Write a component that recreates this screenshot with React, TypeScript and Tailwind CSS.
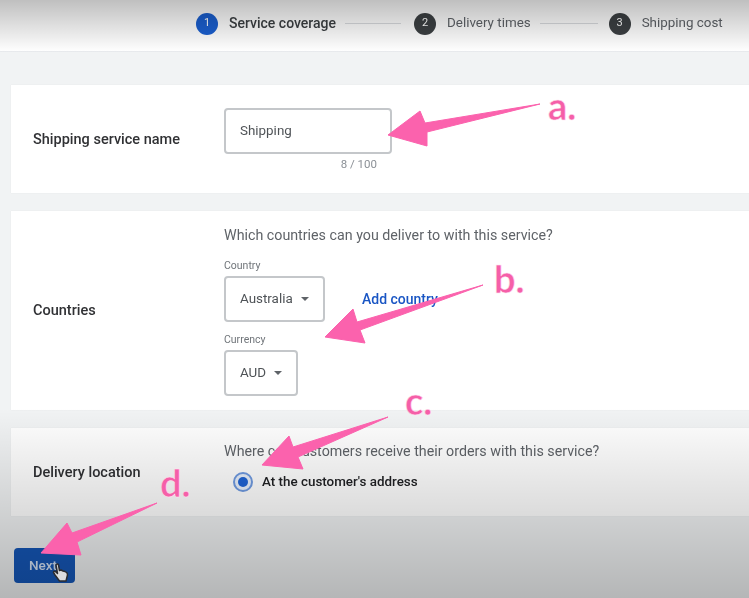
const arrows = [
  "388,135 420,111 425,123 540,104 427,132 427,146",
  "325,337 353,309 357,322 483,285 360,330 365,343",
  "262,465 289,436 293,447 388,417 298,457 303,469",
  "41,553 67,523 72,533 157,503 77,542 81,555",
];

const letters = "absolute text-[38px] leading-[40px] font-['Lato',sans-serif] font-bold text-[#f55fa8] [-webkit-text-stroke:0.5px_#ffe3f1]";

function Step({ n, label, active }: { n: number; label: string; active?: boolean }) {
  return (
    <div className="flex items-center gap-[11px]">
      <div
        className={
          active
            ? "w-[22px] h-[22px] rounded-full bg-[#1a5fd0] text-white text-[11px] flex items-center justify-center"
            : "w-[22px] h-[22px] rounded-full bg-[#3c4043] text-white text-[11px] flex items-center justify-center"
        }
      >
        {n}
      </div>
      <span className={active ? "text-[14px] font-medium text-[#3c4043]" : "text-[13.4px] text-[#5f6368]"}>{label}</span>
    </div>
  );
}

function Select({ label, value, width }: { label: string; value: string; width: string }) {
  return (
    <div>
      <div className="text-[10.5px] leading-[12px] text-[#70757a] mb-[4px]">{label}</div>
      <div className={`${width} h-[46px] border-2 border-[#c4c7ca] rounded-[4px] bg-white flex items-center pl-[14px] gap-[8px] text-[13.4px] text-[#4f5357]`}>
        {value}
        <span className="w-0 h-0 border-x-[4px] border-x-transparent border-t-[4px] border-t-[#5f6368]" />
      </div>
    </div>
  );
}

export default function App() {
  return (
    <div className="relative w-[749px] h-[598px] overflow-hidden bg-[#f1f3f4] font-['Roboto',sans-serif]">
      <div className="blur-[0.7px]">
        <header className="h-[52px] bg-white border-b border-[#e8eaed] flex items-center pl-[196px] pb-[4px]">
          <Step n={1} label="Service coverage" active />
          <div className="w-[56px] h-px bg-[#dadce0] ml-[9px] mr-[13px]" />
          <Step n={2} label="Delivery times" />
          <div className="w-[58px] h-px bg-[#dadce0] ml-[9px] mr-[11px]" />
          <Step n={3} label="Shipping cost" />
        </header>

        <main className="pt-[33px] pl-[11px] flex flex-col gap-[18px]">
          <section className="h-[108px] bg-white flex items-center shadow-[0_0_1px_rgba(0,0,0,0.08)]">
            <div className="w-[213px] pl-[22px] mt-[2px] text-[14.5px] font-medium text-[#303134]">Shipping service name</div>
            <div className="w-[168px] self-start mt-[23px]">
              <div className="h-[46px] border-2 border-[#c4c7ca] rounded-[4px] flex items-center pl-[14px] text-[13.4px] text-[#4f5357]">
                Shipping
              </div>
              <div className="text-[11.5px] text-[#8b9096] text-right pr-[15px] mt-[2px]">8 / 100</div>
            </div>
          </section>

          <section className="h-[199px] bg-white flex items-center shadow-[0_0_1px_rgba(0,0,0,0.08)]">
            <div className="w-[213px] pl-[22px] mt-[1px] text-[14.5px] font-medium text-[#303134]">Countries</div>
            <div className="mt-[2px]">
              <div className="text-[14.25px] leading-[16px] text-[#5f6368] mb-[17px]">Which countries can you deliver to with this service?</div>
              <div className="flex items-center gap-[37px]">
                <Select label="Country" value="Australia" width="w-[101px]" />
                <span className="text-[14px] font-medium text-[#1a56c4] mt-[16px]">Add country</span>
              </div>
              <div className="mt-[12px]">
                <Select label="Currency" value="AUD" width="w-[74px]" />
              </div>
            </div>
          </section>

          <section className="h-[88px] bg-white flex items-center shadow-[0_0_1px_rgba(0,0,0,0.08)]">
            <div className="w-[213px] pl-[22px] mt-[2px] text-[14.5px] font-medium text-[#303134]">Delivery location</div>
            <div className="-mt-[9px]">
              <div className="text-[14.25px] leading-[16px] text-[#5f6368] mb-[13px]">Where can customers receive their orders with this service?</div>
              <div className="flex items-center gap-[9px] pl-[9px]">
                <div className="w-[20px] h-[20px] rounded-full border-[2px] border-[#6f9ae0] bg-[#e8f0fc] flex items-center justify-center">
                  <div className="w-[10px] h-[10px] rounded-full bg-[#1f63d4]" />
                </div>
                <span className="text-[13.4px] font-medium text-[#202124]">At the customer's address</span>
              </div>
            </div>
          </section>

          <div className="pl-[3px] pt-[14px]">
            <button className="w-[61px] h-[35px] rounded-[4px] bg-[#1557b8] text-[#d5e3f6] text-[13.5px] font-medium pr-[3px]">Next</button>
          </div>
        </main>
      </div>

      {/* video vignette */}
      <div className="absolute inset-x-0 top-0 h-[52px] bg-gradient-to-b from-black/25 to-transparent pointer-events-none" />
      <div className="absolute inset-x-0 bottom-0 h-[190px] bg-gradient-to-b from-transparent to-black/25 pointer-events-none" />

      {/* annotation arrows */}
      <svg className="absolute inset-0" width="749" height="598" viewBox="0 0 749 598">
        {arrows.map((p) => (
          <polygon key={p} points={p} fill="#fb62ad" stroke="#fb62ad" strokeWidth="1" strokeLinejoin="round" />
        ))}
        <path d="M56 565c0-1.500 2.500-1.500 2.500 0l1 5.500 1.500-.5 2 1 2 .5 1.500 1c1 .5 1 1.500 1 2.500l-1.500 6h-6.500l-4.500-6-1.500-2.500c0-1.500 1.500-1.500 2.500-.5l1.500 1.500z" fill="#dcdcde" stroke="#2b2c30" strokeWidth="1.5" strokeLinejoin="round" />
      </svg>

      <span className={`${letters} left-[548px] top-[85px]`}>a.</span>
      <span className={`${letters} left-[494px] top-[258px]`}>b.</span>
      <span className={`${letters} left-[405px] top-[380px]`}>c.</span>
      <span className={`${letters} left-[160px] top-[462px]`}>d.</span>
    </div>
  );
}
